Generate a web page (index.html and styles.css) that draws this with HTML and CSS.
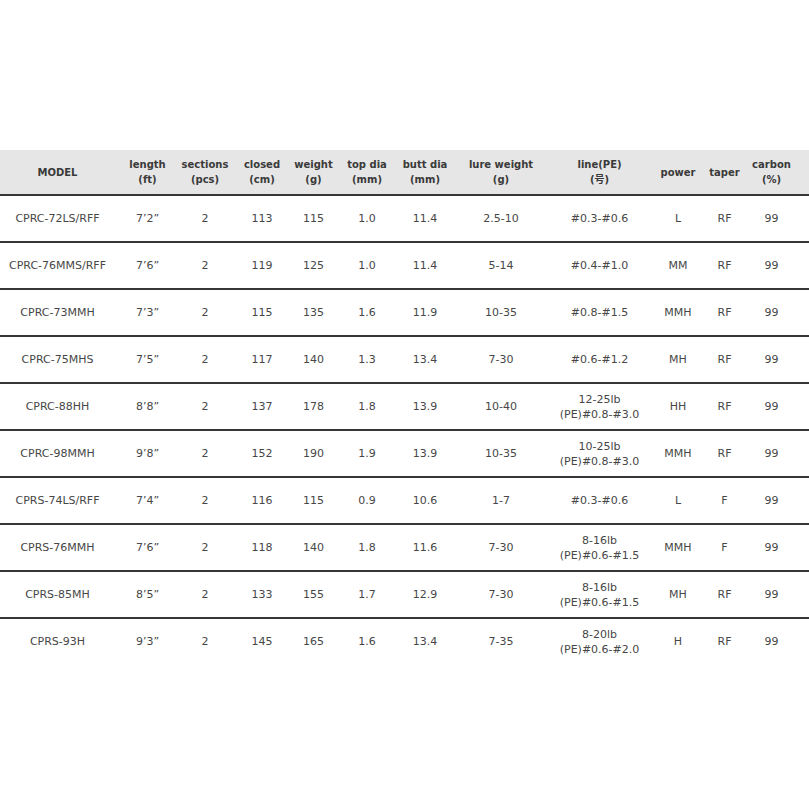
FILE: index.html
```html
<!DOCTYPE html>
<html>
<head>
<meta charset="utf-8">
<link rel="stylesheet" href="styles.css">
</head>
<body>
<div class="page">
  <div class="spec">
    <div class="row head">
      <div class="c">MODEL</div>
      <div class="c">length<br>(ft)</div>
      <div class="c">sections<br>(pcs)</div>
      <div class="c">closed<br>(cm)</div>
      <div class="c">weight<br>(g)</div>
      <div class="c">top dia<br>(mm)</div>
      <div class="c">butt dia<br>(mm)</div>
      <div class="c">lure weight<br>(g)</div>
      <div class="c">line(PE)<br>(号)</div>
      <div class="c">power</div>
      <div class="c">taper</div>
      <div class="c">carbon<br>(%)</div>
    </div>
    <div class="row">
      <div class="c">CPRC-72LS/RFF</div><div class="c">7’2”</div><div class="c">2</div><div class="c">113</div><div class="c">115</div><div class="c">1.0</div><div class="c">11.4</div><div class="c">2.5-10</div><div class="c">#0.3-#0.6</div><div class="c">L</div><div class="c">RF</div><div class="c">99</div>
    </div>
    <div class="row">
      <div class="c">CPRC-76MMS/RFF</div><div class="c">7’6”</div><div class="c">2</div><div class="c">119</div><div class="c">125</div><div class="c">1.0</div><div class="c">11.4</div><div class="c">5-14</div><div class="c">#0.4-#1.0</div><div class="c">MM</div><div class="c">RF</div><div class="c">99</div>
    </div>
    <div class="row">
      <div class="c">CPRC-73MMH</div><div class="c">7’3”</div><div class="c">2</div><div class="c">115</div><div class="c">135</div><div class="c">1.6</div><div class="c">11.9</div><div class="c">10-35</div><div class="c">#0.8-#1.5</div><div class="c">MMH</div><div class="c">RF</div><div class="c">99</div>
    </div>
    <div class="row">
      <div class="c">CPRC-75MHS</div><div class="c">7’5”</div><div class="c">2</div><div class="c">117</div><div class="c">140</div><div class="c">1.3</div><div class="c">13.4</div><div class="c">7-30</div><div class="c">#0.6-#1.2</div><div class="c">MH</div><div class="c">RF</div><div class="c">99</div>
    </div>
    <div class="row">
      <div class="c">CPRC-88HH</div><div class="c">8’8”</div><div class="c">2</div><div class="c">137</div><div class="c">178</div><div class="c">1.8</div><div class="c">13.9</div><div class="c">10-40</div><div class="c">12-25lb<br>(PE)#0.8-#3.0</div><div class="c">HH</div><div class="c">RF</div><div class="c">99</div>
    </div>
    <div class="row">
      <div class="c">CPRC-98MMH</div><div class="c">9’8”</div><div class="c">2</div><div class="c">152</div><div class="c">190</div><div class="c">1.9</div><div class="c">13.9</div><div class="c">10-35</div><div class="c">10-25lb<br>(PE)#0.8-#3.0</div><div class="c">MMH</div><div class="c">RF</div><div class="c">99</div>
    </div>
    <div class="row">
      <div class="c">CPRS-74LS/RFF</div><div class="c">7’4”</div><div class="c">2</div><div class="c">116</div><div class="c">115</div><div class="c">0.9</div><div class="c">10.6</div><div class="c">1-7</div><div class="c">#0.3-#0.6</div><div class="c">L</div><div class="c">F</div><div class="c">99</div>
    </div>
    <div class="row">
      <div class="c">CPRS-76MMH</div><div class="c">7’6”</div><div class="c">2</div><div class="c">118</div><div class="c">140</div><div class="c">1.8</div><div class="c">11.6</div><div class="c">7-30</div><div class="c">8-16lb<br>(PE)#0.6-#1.5</div><div class="c">MMH</div><div class="c">F</div><div class="c">99</div>
    </div>
    <div class="row">
      <div class="c">CPRS-85MH</div><div class="c">8’5”</div><div class="c">2</div><div class="c">133</div><div class="c">155</div><div class="c">1.7</div><div class="c">12.9</div><div class="c">7-30</div><div class="c">8-16lb<br>(PE)#0.6-#1.5</div><div class="c">MH</div><div class="c">RF</div><div class="c">99</div>
    </div>
    <div class="row last">
      <div class="c">CPRS-93H</div><div class="c">9’3”</div><div class="c">2</div><div class="c">145</div><div class="c">165</div><div class="c">1.6</div><div class="c">13.4</div><div class="c">7-35</div><div class="c">8-20lb<br>(PE)#0.6-#2.0</div><div class="c">H</div><div class="c">RF</div><div class="c">99</div>
    </div>
  </div>
</div>
</body>
</html>
```
FILE: styles.css
```css
html, body {
  margin: 0;
  padding: 0;
  background: #ffffff;
}
.page {
  padding-top: 150px;
  width: 809px;
}
.spec {
  display: flex;
  flex-direction: column;
  font-family: "DejaVu Sans", Verdana, "Noto Sans CJK JP", sans-serif;
  font-size: 11px;
  line-height: 15px;
  color: #474747;
}
.row {
  display: grid;
  grid-template-columns: 115px 65px 50px 64px 39px 68px 48px 104px 93px 64px 29px 65px 5px;
  height: 45px;
  border-bottom: 2px solid #363636;
}
.row.last {
  border-bottom: none;
}
.row.head {
  height: 44px;
  background: #e6e6e6;
  font-weight: bold;
  font-size: 10px;
  color: #3a3a3a;
}
.c {
  display: flex;
  align-items: center;
  justify-content: center;
  text-align: center;
  white-space: nowrap;
  min-width: 0;
}
```
